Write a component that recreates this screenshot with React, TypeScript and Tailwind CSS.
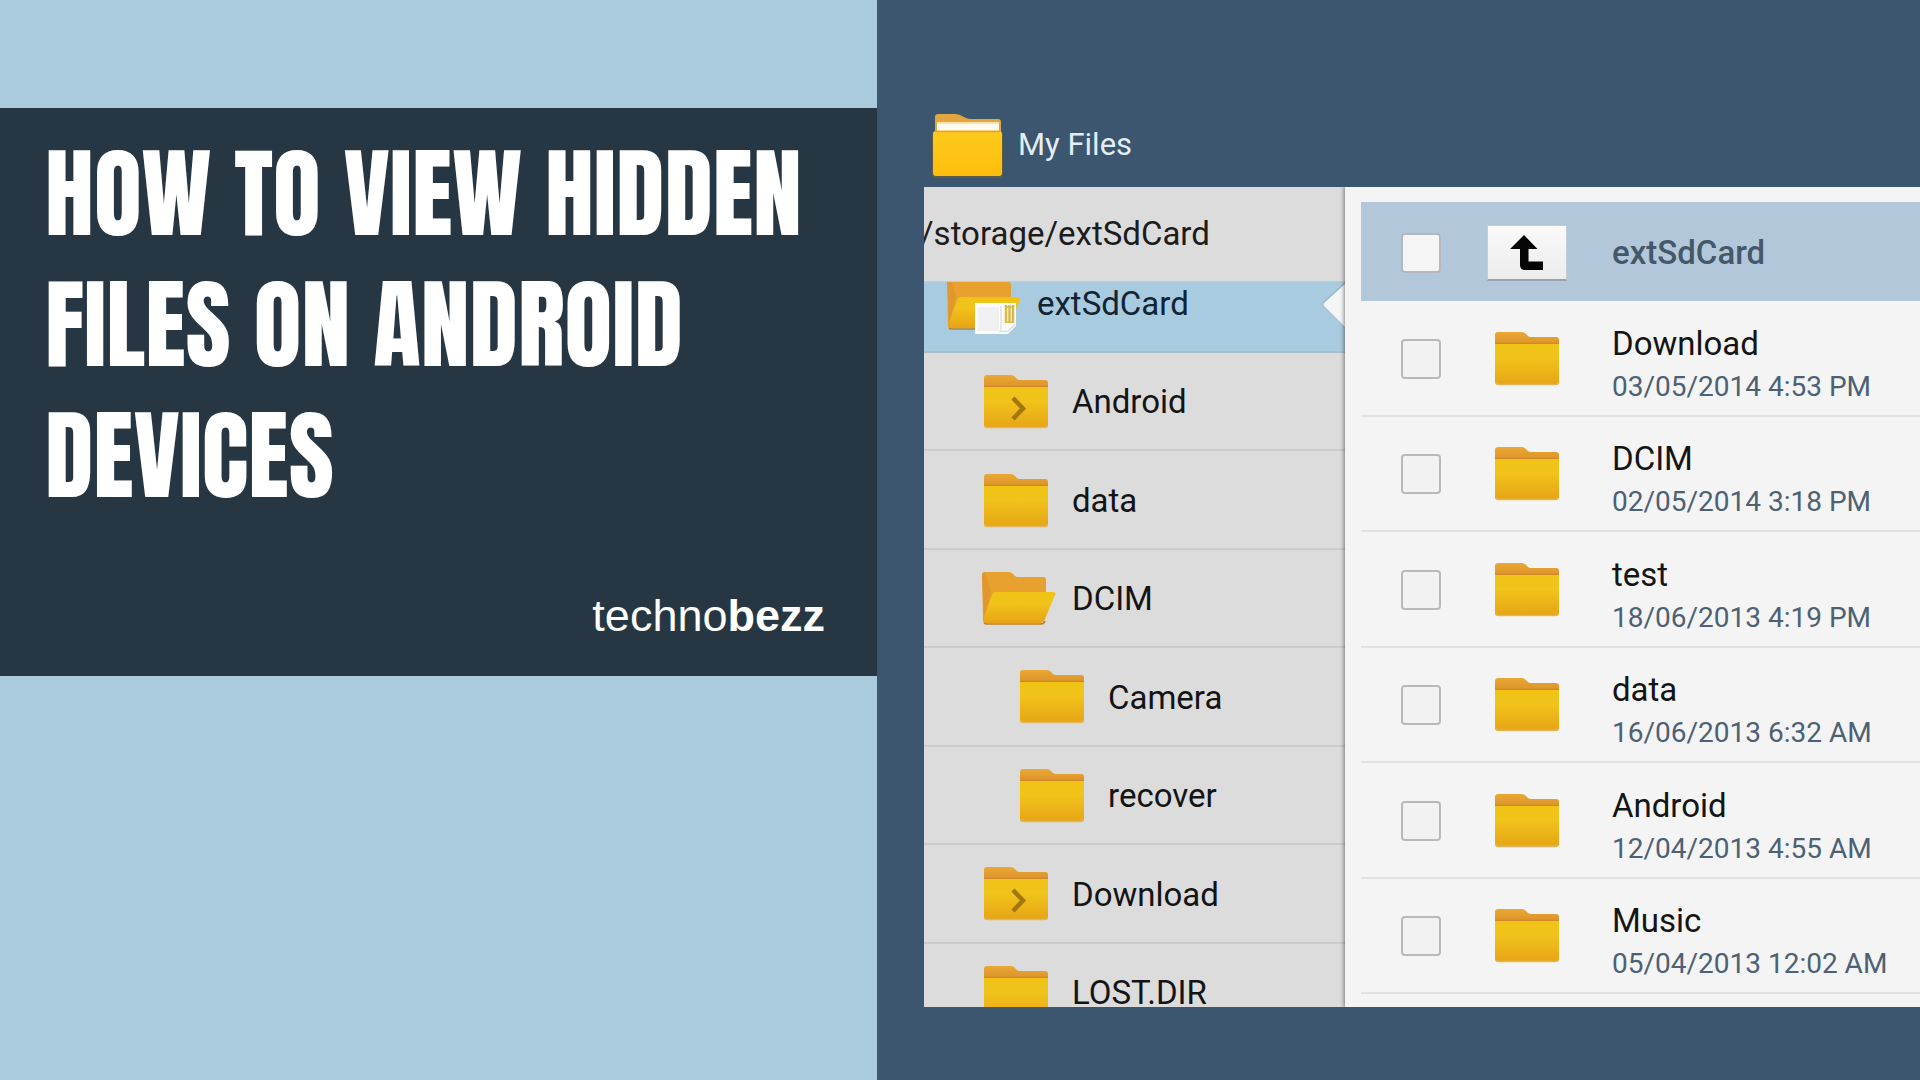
import type { ReactNode } from 'react';

type FolderKind = 'closed' | 'expandable' | 'open' | 'card';

interface TreeItem {
  name: string;
  kind: FolderKind;
  nested?: boolean;
}

const tree: TreeItem[] = [
  { name: 'Android', kind: 'expandable' },
  { name: 'data', kind: 'closed' },
  { name: 'DCIM', kind: 'open' },
  { name: 'Camera', kind: 'closed', nested: true },
  { name: 'recover', kind: 'closed', nested: true },
  { name: 'Download', kind: 'expandable' },
  { name: 'LOST.DIR', kind: 'closed' },
];

const files = [
  { name: 'Download', date: '03/05/2014 4:53 PM' },
  { name: 'DCIM', date: '02/05/2014 3:18 PM' },
  { name: 'test', date: '18/06/2013 4:19 PM' },
  { name: 'data', date: '16/06/2013 6:32 AM' },
  { name: 'Android', date: '12/04/2013 4:55 AM' },
  { name: 'Music', date: '05/04/2013 12:02 AM' },
];

// Shared gradients for every folder drawing
function FolderDefs() {
  return (
    <svg className="absolute h-0 w-0" aria-hidden="true">
      <defs>
        <linearGradient id="folder-front" x1="0" y1="0" x2="0" y2="1">
          <stop offset="0" stopColor="#f0c316" />
          <stop offset="0.35" stopColor="#f1c31b" />
          <stop offset="1" stopColor="#e7a416" />
        </linearGradient>
        <linearGradient id="folder-back" x1="0" y1="0" x2="0" y2="1">
          <stop offset="0" stopColor="#eaa833" />
          <stop offset="1" stopColor="#d98e28" />
        </linearGradient>
        <linearGradient id="folder-app" x1="0" y1="0" x2="0" y2="1">
          <stop offset="0" stopColor="#fecb1c" />
          <stop offset="1" stopColor="#fdbd0c" />
        </linearGradient>
      </defs>
    </svg>
  );
}

function ClosedFolder({ arrow = false }: { arrow?: boolean }) {
  return (
    <svg viewBox="0 0 66 56" className="h-14 w-[66px] shrink-0" aria-hidden="true">
      <path d="M1 16V4q0-3 3-3h24q2 0 3.500 1.500L34 5q1 1 3 1h25q3 0 3 3v7z" fill="url(#folder-back)" />
      <path d="M1 12.500h64" stroke="#cb8526" strokeWidth="1.500" opacity="0.7" />
      <path d="M1 13h64v38q0 3-3 3H4q-3 0-3-3z" fill="url(#folder-front)" />
      <path d="M2 51.500q1 2 3 2h56q2 0 3-2" fill="none" stroke="#e2b65a" strokeWidth="1.500" />
      {arrow && <path d="M30 24l10 10.500L30 45" fill="none" stroke="#a3770d" strokeWidth="4.500" />}
    </svg>
  );
}

function OpenFolder({ card = false }: { card?: boolean }) {
  return (
    <svg viewBox="0 0 76 60" className="-ml-0.5 h-[60px] w-[76px] shrink-0" aria-hidden="true">
      <path d="M1 6q0-3 3-3h24q2 0 3.500 1.500L34 7q1 1 3 1h25q3 0 3 3v26L59 54H5q-3 0-3-3z" fill="#e8a02e" />
      <path d="M1 6q0-3 3-3l6 20L3 50z" fill="#d98e28" opacity="0.5" />
      <path
        d="M15 23h57q3 0 2 3l-10 24q-1.500 4-5 4H5q-3.500 0-2.500-4l8.500-24q1-3 4-3z"
        fill="url(#folder-front)"
      />
      <path d="M3 54q1 1 3 1h54q3 0 4-3" fill="none" stroke="#b98220" strokeWidth="1.500" />
      {card && (
        <g>
          <path d="M29 29h41v23l-8 8H29z" fill="#fbfbf8" />
          <path d="M32 33h21v24H32z" fill="#f0f0f2" />
          <path d="M55 32v25" stroke="#d5d5d8" strokeWidth="1" />
          <path d="M60 31v18M63.500 31v18M67 31v18" stroke="#dcb84a" strokeWidth="2.500" />
          <path d="M60 33h8M60 48h8" stroke="#dcb84a" strokeWidth="1.500" />
          <path d="M53 57.500h9l7-7" fill="none" stroke="#d9dfe3" strokeWidth="1.500" />
        </g>
      )}
    </svg>
  );
}

function AppFolder() {
  return (
    <svg viewBox="0 0 74 66" className="h-[66px] w-[74px] shrink-0" aria-hidden="true">
      <path d="M3 24V5q0-3 3-3h17q4 0 7 2l4 2q2 1 5 1h27q3 0 3 3v14z" fill="#e3a53f" />
      <path d="M5 10h62v10H5z" fill="#fbe0a8" />
      <path d="M5 12h62v6H5z" fill="#fffaf0" />
      <path d="M0 23q0-3 3-3h65q3 0 3 3v39q0 4-3 4H3q-3 0-3-4z" fill="#76602a" opacity="0.6" />
      <path d="M1 22q0-3 3-3h63q3 0 3 3v39q0 3-3 3H4q-3 0-3-3z" fill="url(#folder-app)" />
      <path d="M3 19.500h65" stroke="#e6a522" strokeWidth="1.500" />
    </svg>
  );
}

function TreeIcon({ kind }: { kind: FolderKind }) {
  if (kind === 'open') return <OpenFolder />;
  if (kind === 'card') return <OpenFolder card />;
  return <ClosedFolder arrow={kind === 'expandable'} />;
}

function TreeRow({ item }: { item: TreeItem }) {
  return (
    <li className="border-b-2 border-[#cbcbcb]">
      <button
        type="button"
        className={`flex h-full w-full items-center pt-0.5 text-left text-[33px] text-[#141414] ${item.nested ? 'pl-[95px]' : 'pl-[59px]'}`}
      >
        <span className="flex w-[89px] shrink-0 items-center">
          <TreeIcon kind={item.kind} />
        </span>
        {item.name}
      </button>
    </li>
  );
}

function Checkbox({ label, solid = false }: { label: string; solid?: boolean }) {
  return (
    <input
      type="checkbox"
      aria-label={label}
      className={`size-10 shrink-0 appearance-none rounded-sm border-2 ${
        solid ? 'border-[#b3b8be] bg-[#f5f5f5]' : 'border-[#b9b9b9] bg-[#f2f2f2]'
      }`}
    />
  );
}

function FileRow({ label, icon, solid, children }: { label: string; icon: ReactNode; solid?: boolean; children: ReactNode }) {
  return (
    <>
      <Checkbox label={label} solid={solid} />
      <div className="flex w-[171px] shrink-0 items-center justify-center">{icon}</div>
      <div className="min-w-0 whitespace-nowrap">{children}</div>
    </>
  );
}

function TitleCard() {
  return (
    <section className="bg-[#aacbde] pt-[108px]">
      <div className="flex h-[568px] flex-col justify-between bg-[#263743] pt-5 pr-[52px] pb-[34px] pl-[45px] text-white">
        <h1 className="font-[Anton,Impact,sans-serif] text-[98px] leading-[131px] font-normal uppercase">
          How to view hidden files on Android devices
        </h1>
        <p className="text-right font-['Liberation_Sans',Arial,sans-serif] text-[45px] leading-[52px]">
          techno<b>bezz</b>
        </p>
      </div>
    </section>
  );
}

function FileBrowser() {
  return (
    <section className="flex h-screen min-w-0 flex-col bg-[#3b566e] pb-[73px] pl-[47px] font-[Roboto,sans-serif]">
      <header className="flex h-[187px] shrink-0 items-end gap-3 pb-[9px] pl-2">
        <AppFolder />
        <h2 className="pb-[15px] text-[31px] leading-9 text-[#e3edf5]">My Files</h2>
      </header>

      <div className="flex min-h-0 flex-1 overflow-hidden">
        {/* Folder tree */}
        <nav className="w-[421px] shrink-0 bg-[#dcdcdc]" aria-label="Folders">
          <p className="flex h-[95px] items-center overflow-hidden border-b border-[#c9c9c9] text-[33px] text-[#1c1c1c]">
            <span className="-ml-1">/storage/extSdCard</span>
          </p>
          <div className="relative flex h-[71px] flex-col justify-end overflow-hidden border-b-2 border-[#a9bfcc] bg-[#a9cbdf]">
            <button type="button" className="flex h-[94px] shrink-0 items-center pl-6 text-left text-[33px] text-[#122433]">
              <span className="w-[89px] shrink-0">
                <TreeIcon kind="card" />
              </span>
              extSdCard
            </button>
            <svg viewBox="0 0 24 46" className="absolute top-0 right-0 h-[46px] w-6" aria-hidden="true">
              <path d="M24 0L3 19q-3 3 0 6l21 21z" fill="#8eabbb" opacity="0.6" />
              <path d="M24 2L4 20q-3 2.500 0 5l20 20z" fill="#f4f5f6" />
            </svg>
          </div>
          <ul className="grid h-[689px] grid-rows-7">
            {tree.map((item) => (
              <TreeRow key={item.name} item={item} />
            ))}
          </ul>
        </nav>

        {/* Folder contents */}
        <main className="min-w-0 flex-1 bg-[#f4f4f4] pt-[15px] pl-4 shadow-[-1px_0_4px_rgba(0,0,0,0.45)] [clip-path:inset(0_0_0_-6px)]">
          <div className="flex h-[99px] items-center bg-[#b3c7db] pt-0.5 pl-10">
            <FileRow
              label="Select all"
              solid
              icon={
                <button
                  type="button"
                  aria-label="Up one level"
                  className="flex h-14 w-20 items-center justify-center border border-[#c4ccd4] border-b-2 border-b-[#98a3af] bg-linear-to-b from-[#fafafa] to-[#ececec]"
                >
                  <svg viewBox="0 0 34 36" className="h-9 w-[34px]" aria-hidden="true">
                    <path d="M14 1l13.500 14H18.500v12.500H33V36H15q-5 0-5-5V15H0z" fill="#050505" />
                  </svg>
                </button>
              }
            >
              <span className="text-[33px] font-medium text-[#44586a]">extSdCard</span>
            </FileRow>
          </div>
          <ul className="grid h-[693px] grid-rows-6">
            {files.map((file) => (
              <li key={file.name} className="flex items-center border-b-2 border-[#e3e2e2] pt-0.5 pl-10">
                <FileRow label={`Select ${file.name}`} icon={<ClosedFolder />}>
                  <p className="pt-3 text-[33px] leading-[44px] text-[#141414]">{file.name}</p>
                  <p className="text-[28px] leading-[42px] text-[#4d6175]">{file.date}</p>
                </FileRow>
              </li>
            ))}
          </ul>
        </main>
      </div>
    </section>
  );
}

export default function App() {
  return (
    <div className="grid min-h-screen grid-cols-[877fr_1043fr]">
      <FolderDefs />
      <TitleCard />
      <FileBrowser />
    </div>
  );
}
